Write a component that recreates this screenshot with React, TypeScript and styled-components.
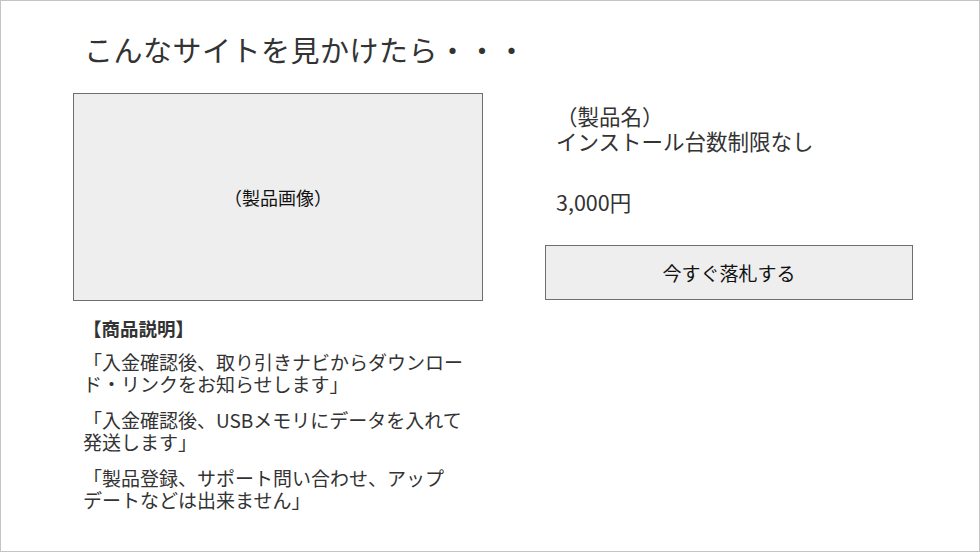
import React from "react";
import styled, { createGlobalStyle } from "styled-components";

const GlobalStyle = createGlobalStyle`
  html, body {
    margin: 0;
    padding: 0;
    background: #ffffff;
  }
  body {
    font-family: "Noto Sans CJK JP", "Noto Sans", sans-serif;
  }
`;

const Frame = styled.div`
  width: 980px;
  height: 552px;
  box-sizing: border-box;
  border: 1px solid #c4c4c4;
  padding-top: 31px;
  display: flex;
  flex-direction: column;
  color: #333333;
`;

const Title = styled.h1`
  margin: 0 0 0 83px;
  font-size: 29px;
  letter-spacing: 0.5px;
  line-height: 34px;
  font-weight: 400;
  color: #333333;
`;

const Content = styled.div`
  display: flex;
  gap: 62px;
  margin-top: 27px;
  padding-left: 72px;
`;

const LeftColumn = styled.div`
  width: 410px;
  display: flex;
  flex-direction: column;
`;

const ImageBox = styled.div`
  width: 410px;
  height: 208px;
  box-sizing: border-box;
  border: 1px solid #6e6e6e;
  background: #eeeeee;
  display: flex;
  align-items: center;
  justify-content: center;
  font-size: 18px;
  line-height: 24px;
  color: #111111;
`;

const Description = styled.div`
  padding-left: 10px;
  margin-top: 15px;
  display: flex;
  flex-direction: column;
`;

const DescHeading = styled.div`
  font-size: 18.5px;
  line-height: 24px;
  font-weight: 700;
  color: #333333;
  margin-bottom: 11px;
`;

const DescParagraph = styled.p<{ $gap?: number }>`
  margin: 0;
  margin-top: ${(p) => p.$gap ?? 0}px;
  font-size: 19px;
  line-height: 22px;
  color: #333333;
`;

const RightColumn = styled.div`
  width: 368px;
  display: flex;
  flex-direction: column;
`;

const ProductInfo = styled.div`
  padding: 10px 0 0 11px;
  font-size: 21.5px;
  line-height: 25px;
  color: #333333;
`;

const ProductName = styled.div``;

const Price = styled.div`
  margin-top: 36px;
`;

const BidButton = styled.button`
  margin-top: 31px;
  width: 368px;
  height: 55px;
  box-sizing: border-box;
  border: 1px solid #6e6e6e;
  background: #eeeeee;
  font-family: "Noto Sans CJK JP", "Noto Sans", sans-serif;
  font-size: 19px;
  color: #111111;
  padding: 0;
  cursor: pointer;
`;

export default function App() {
  return (
    <>
      <GlobalStyle />
      <Frame>
        <Title>こんなサイトを見かけたら・・・</Title>
        <Content>
          <LeftColumn>
            <ImageBox>（製品画像）</ImageBox>
            <Description>
              <DescHeading>【商品説明】</DescHeading>
              <DescParagraph>
                「入金確認後、取り引きナビからダウンロー
                <br />
                ド・リンクをお知らせします」
              </DescParagraph>
              <DescParagraph $gap={14}>
                「入金確認後、USBメモリにデータを入れて
                <br />
                発送します」
              </DescParagraph>
              <DescParagraph $gap={14}>
                「製品登録、サポート問い合わせ、アップ
                <br />
                デートなどは出来ません」
              </DescParagraph>
            </Description>
          </LeftColumn>
          <RightColumn>
            <ProductInfo>
              <ProductName>
                （製品名）
                <br />
                インストール台数制限なし
              </ProductName>
              <Price>3,000円</Price>
            </ProductInfo>
            <BidButton>今すぐ落札する</BidButton>
          </RightColumn>
        </Content>
      </Frame>
    </>
  );
}
